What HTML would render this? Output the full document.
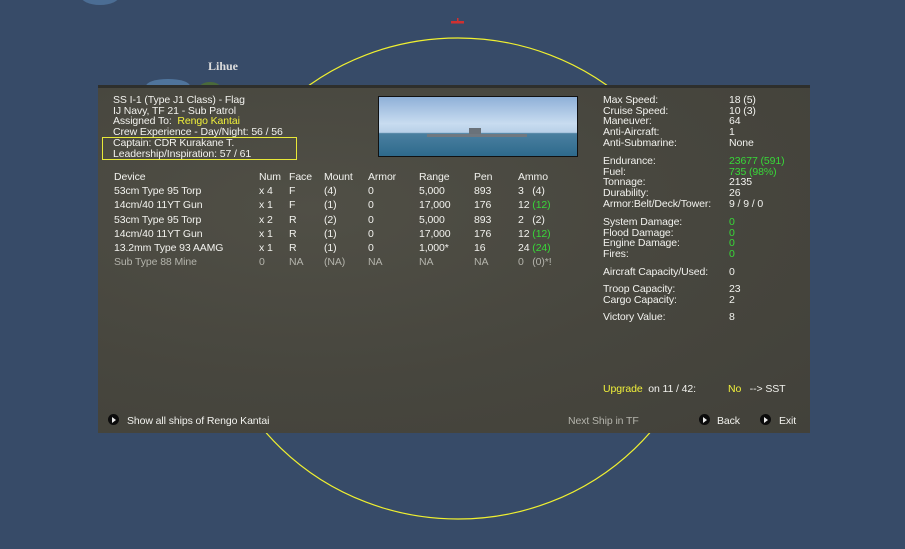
<!DOCTYPE html>
<html><head><meta charset="utf-8"><style>
body{margin:0;width:905px;height:549px;overflow:hidden;background:#374b68;position:relative;font-family:"Liberation Sans",sans-serif;}
.p{position:absolute;left:98px;top:85px;width:712px;height:348px;background:#47463e;border-top:3px solid #2e2f2c;box-sizing:border-box;
background-image:radial-gradient(ellipse at 30% 35%,#504f46 0,#47463e 55%,#42413a 100%);}
.t{position:absolute;color:#f2f2ee;font-size:10.5px;line-height:10.7px;white-space:nowrap;letter-spacing:-0.1px;}
.y{color:#f0f03a}.g{color:#38d838}.gr{color:#b4b4ac}
.b{position:absolute;width:11px;height:11px;border-radius:50%;background:#0c0c0c;}
.b:after{content:"";position:absolute;left:4px;top:2.5px;border-left:4px solid #eee;border-top:3px solid transparent;border-bottom:3px solid transparent;}
</style></head><body>
<svg width="905" height="549" style="position:absolute;left:0;top:0">
<ellipse cx="100" cy="-5" rx="20" ry="10" fill="#5f8fc0" opacity=".5"/>
<ellipse cx="168" cy="86" rx="22" ry="7" fill="#5f8fc0" opacity=".6"/>
<ellipse cx="210" cy="87" rx="10" ry="5" fill="#4a6a3a"/>
<ellipse cx="458" cy="278.5" rx="250" ry="240.5" fill="none" stroke="#f0f030" stroke-width="1.2"/>
<rect x="451" y="21" width="13" height="2.5" fill="#d03030"/><rect x="457" y="18" width="1.5" height="4" fill="#d03030"/>
<text x="208" y="70" font-family="Liberation Serif" font-weight="bold" font-size="12" fill="#dcdcdc">Lihue</text>
</svg>
<div class="p">
<div style="position:absolute;left:280px;top:8px;width:198px;height:59px;border:1px solid #111;background:linear-gradient(#8fb0d8 0,#c8dcf0 45%,#b8d0e8 60%,#4a7fa0 62%,#2e6a8c 100%)">
<div style="position:absolute;left:48px;top:37px;width:100px;height:3px;background:#707880"></div>
<div style="position:absolute;left:90px;top:31px;width:12px;height:6px;background:#6a727a"></div>
</div>
<div style="position:absolute;left:4px;top:49px;width:193px;height:21px;border:1px solid #e8e838"></div>
</div>
<div class="t" style="left:113px;top:95px">SS I-1 (Type J1 Class) - Flag<br>IJ Navy, TF 21 - Sub Patrol<br>Assigned To: &nbsp;<span class="y">Rengo Kantai</span><br>Crew Experience - Day/Night: 56 / 56<br>Captain: CDR Kurakane T.<br>Leadership/Inspiration: 57 / 61</div>
<div class="t" style="left:114px;top:170px;line-height:14.2px">Device<br>53cm Type 95 Torp<br>14cm/40 11YT Gun<br>53cm Type 95 Torp<br>14cm/40 11YT Gun<br>13.2mm Type 93 AAMG<br><span class="gr">Sub Type 88 Mine</span></div>
<div class="t" style="left:259px;top:170px;line-height:14.2px">Num<br>x 4<br>x 1<br>x 2<br>x 1<br>x 1<br><span class="gr">0</span></div>
<div class="t" style="left:289px;top:170px;line-height:14.2px">Face<br>F<br>F<br>R<br>R<br>R<br><span class="gr">NA</span></div>
<div class="t" style="left:324px;top:170px;line-height:14.2px">Mount<br>(4)<br>(1)<br>(2)<br>(1)<br>(1)<br><span class="gr">(NA)</span></div>
<div class="t" style="left:368px;top:170px;line-height:14.2px">Armor<br>0<br>0<br>0<br>0<br>0<br><span class="gr">NA</span></div>
<div class="t" style="left:419px;top:170px;line-height:14.2px">Range<br>5,000<br>17,000<br>5,000<br>17,000<br>1,000*<br><span class="gr">NA</span></div>
<div class="t" style="left:474px;top:170px;line-height:14.2px">Pen<br>893<br>176<br>893<br>176<br>16<br><span class="gr">NA</span></div>
<div class="t" style="left:518px;top:170px;line-height:14.2px">Ammo<br>3 &nbsp;&nbsp;(4)<br>12 <span class="g">(12)</span><br>2 &nbsp;&nbsp;(2)<br>12 <span class="g">(12)</span><br>24 <span class="g">(24)</span><br><span class="gr">0 &nbsp;&nbsp;(0)*!</span></div>
<div class="t" style="left:603px;top:95px">Max Speed:<br>Cruise Speed:<br>Maneuver:<br>Anti-Aircraft:<br>Anti-Submarine:</div>
<div class="t" style="left:729px;top:95px">18 (5)<br>10 (3)<br>64<br>1<br>None</div>
<div class="t" style="left:603px;top:156px">Endurance:<br>Fuel:<br>Tonnage:<br>Durability:<br>Armor:Belt/Deck/Tower:</div>
<div class="t" style="left:729px;top:156px"><span class="g">23677 (591)</span><br><span class="g">735 (98%)</span><br>2135<br>26<br>9 / 9 / 0</div>
<div class="t" style="left:603px;top:217px">System Damage:<br>Flood Damage:<br>Engine Damage:<br>Fires:</div>
<div class="t g" style="left:729px;top:217px">0<br>0<br>0<br>0</div>
<div class="t" style="left:603px;top:267px">Aircraft Capacity/Used:</div><div class="t" style="left:729px;top:267px">0</div>
<div class="t" style="left:603px;top:284px">Troop Capacity:<br>Cargo Capacity:</div><div class="t" style="left:729px;top:284px">23<br>2</div>
<div class="t" style="left:603px;top:312px">Victory Value:</div><div class="t" style="left:729px;top:312px">8</div>
<div class="t" style="left:603px;top:384px"><span class="y">Upgrade</span> &nbsp;on 11 / 42:</div>
<div class="t" style="left:728px;top:384px"><span class="y">No</span> &nbsp;&nbsp;--&gt; SST</div>
<div class="b" style="left:108px;top:414px"></div>
<div class="t" style="left:127px;top:416px">Show all ships of Rengo Kantai</div>
<div class="t gr" style="left:568px;top:416px">Next Ship in TF</div>
<div class="b" style="left:699px;top:414px"></div>
<div class="t" style="left:717px;top:416px">Back</div>
<div class="b" style="left:760px;top:414px"></div>
<div class="t" style="left:779px;top:416px">Exit</div>
</body></html>
